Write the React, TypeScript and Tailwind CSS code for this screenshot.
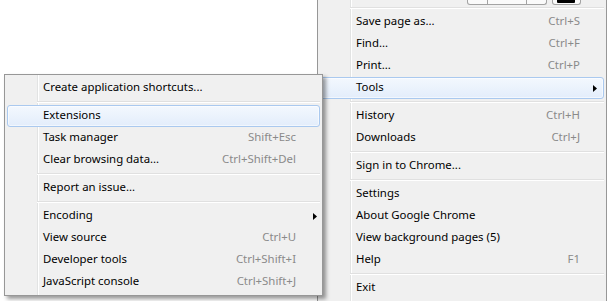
import React from "react";

type Item =
  | { sep: true }
  | { label: string; shortcut?: string; arrow?: boolean; hl?: boolean };

const mainItems: Item[] = [
  { label: "Save page as...", shortcut: "Ctrl+S" },
  { label: "Find...", shortcut: "Ctrl+F" },
  { label: "Print...", shortcut: "Ctrl+P" },
  { label: "Tools", arrow: true, hl: true },
  { sep: true },
  { label: "History", shortcut: "Ctrl+H" },
  { label: "Downloads", shortcut: "Ctrl+J" },
  { sep: true },
  { label: "Sign in to Chrome..." },
  { sep: true },
  { label: "Settings" },
  { label: "About Google Chrome" },
  { label: "View background pages (5)" },
  { label: "Help", shortcut: "F1" },
  { sep: true },
  { label: "Exit" },
];

const subItems: Item[] = [
  { label: "Create application shortcuts..." },
  { sep: true },
  { label: "Extensions", hl: true },
  { label: "Task manager", shortcut: "Shift+Esc" },
  { label: "Clear browsing data...", shortcut: "Ctrl+Shift+Del" },
  { sep: true },
  { label: "Report an issue..." },
  { sep: true },
  { label: "Encoding", arrow: true },
  { label: "View source", shortcut: "Ctrl+U" },
  { label: "Developer tools", shortcut: "Ctrl+Shift+I" },
  { label: "JavaScript console", shortcut: "Ctrl+Shift+J" },
];

function Separator() {
  return (
    <div className="h-[6px] ml-[30px] pt-[2px]">
      <div className="h-px bg-[#e0e0e0]" />
      <div className="h-px bg-white" />
    </div>
  );
}

function Arrow({ sub }: { sub?: boolean }) {
  return (
    <svg
      width="4"
      height="7"
      viewBox="0 0 4 7"
      className={sub ? "ml-[17px]" : "ml-[13px]"}
    >
      <polygon points="0,0 4,3.5 0,7" fill="#000" />
    </svg>
  );
}

function Rows({ items, sub }: { items: Item[]; sub?: boolean }) {
  return (
    <>
      {items.map((it, i) => {
        if ("sep" in it) return <Separator key={i} />;
        return (
          <div
            key={i}
            className={
              "h-[22px] flex items-center rounded-[3px] border pl-[35px] " +
              (it.hl
                ? "border-[#aac9ef] bg-[linear-gradient(to_bottom,#f3f8fe,#e3edfb)] shadow-[inset_0_0_0_1px_rgba(255,255,255,0.55)]"
                : "border-transparent")
            }
          >
            <span className="flex-1 text-black whitespace-nowrap pb-[2px]">{it.label}</span>
            {it.shortcut && (
              <span className="text-[#8a8a8a] whitespace-nowrap pb-[2px]">{it.shortcut}</span>
            )}
            <div className="w-[23px] h-full flex items-center">
              {it.arrow && <Arrow sub={sub} />}
            </div>
          </div>
        );
      })}
    </>
  );
}

export default function App() {
  return (
    <div className="relative w-[607px] h-[301px] overflow-hidden bg-white font-['Noto_Sans',sans-serif] text-[11.4px] leading-none">
      {/* Main Chrome menu */}
      <div className="absolute left-[317px] top-0 w-[290px] h-[320px] border-x border-[#979797] px-[2px] bg-[linear-gradient(to_right,#f0f0f0_32px,#e2e3e3_32px,#e2e3e3_33px,#ffffff_33px,#ffffff_34px,#f0f0f0_34px)]">
        <div className="h-[5px] flex justify-end items-end gap-[5px] pr-[23px]">
          <div className="w-[80px] h-[5px] flex border-x border-b border-[#a3a3a3] rounded-b-[3px] bg-[#fafafa]">
            <div className="w-[20px] border-r border-[#a3a3a3]" />
            <div className="w-[39px] border-r border-[#a3a3a3]" />
            <div className="flex-1" />
          </div>
          <div className="w-[29px] h-[5px] border-x border-b border-[#a3a3a3] rounded-b-[3px] bg-[#fafafa]">
            <div className="ml-[4px] w-[18px] h-[3px] bg-black rounded-b-[1px]" />
          </div>
        </div>
        <Separator />
        <Rows items={mainItems} />
      </div>

      {/* Tools submenu */}
      <div className="absolute left-[4px] top-[74px] w-[319px] border border-[#979797] p-[2px] shadow-[3px_3px_4px_rgba(0,0,0,0.4)] bg-[linear-gradient(to_right,#f0f0f0_32px,#e2e3e3_32px,#e2e3e3_33px,#ffffff_33px,#ffffff_34px,#f0f0f0_34px)]">
        <Rows items={subItems} sub />
      </div>
    </div>
  );
}
